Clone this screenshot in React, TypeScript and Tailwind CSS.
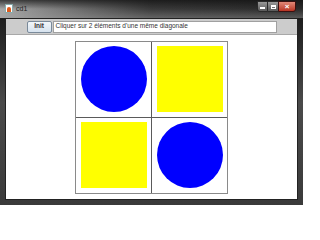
import React from 'react';

const Circle: React.FC = () => (
  <div className="w-[66px] h-[66px] rounded-full bg-[#0000ff]" />
);

const Square: React.FC = () => <div className="w-[66px] h-[66px] bg-[#ffff00]" />;

const Cell: React.FC<{ children: React.ReactNode }> = ({ children }) => (
  <div className="w-[75px] h-[75px] bg-white flex items-center justify-center">{children}</div>
);

const App: React.FC = () => {
  return (
    <div
      className="w-[303px] h-[205px] flex flex-col bg-gradient-to-b from-[#151515] via-[#4a4a4a] to-[#3a3a3a] overflow-hidden"
      style={{ fontFamily: '"Liberation Sans", Arial, sans-serif' }}
    >
      {/* title bar */}
      <div className="h-[18px] flex items-start relative bg-gradient-to-r from-[#a8a8a8] via-[#3a3a3a] to-[#2a2a2a]">
        <div className="absolute inset-0 bg-gradient-to-b from-[#101010]/70 via-transparent to-[#a0a0a0]/40" />
        <div className="relative flex items-center gap-[3px] pl-[5px] pt-[4px]">
          <div className="w-[8px] h-[9px] bg-white border border-[#8aa] flex items-end justify-center">
            <div className="w-[4px] h-[5px] bg-[#e05a1a] rounded-t-[2px]" />
          </div>
          <span className="text-[7px] leading-none text-[#222]">cd1</span>
        </div>
        <div className="relative ml-auto flex mr-[7px] mt-[1px]">
          <div className="w-[11px] h-[11px] rounded-bl-[3px] bg-gradient-to-b from-[#9a9a9a] to-[#5a5a5a] border border-[#2a2a2a] flex items-end justify-center pb-[2px]">
            <div className="w-[5px] h-[2px] bg-white" />
          </div>
          <div className="w-[10px] h-[11px] bg-gradient-to-b from-[#9a9a9a] to-[#5a5a5a] border-y border-[#2a2a2a] flex items-center justify-center">
            <div className="w-[5px] h-[4px] border border-white border-t-2" />
          </div>
          <div className="w-[18px] h-[11px] rounded-br-[3px] bg-gradient-to-b from-[#e08878] to-[#b83222] border border-[#3a1010] flex items-center justify-center text-white text-[8px] font-bold leading-none">
            ×
          </div>
        </div>
      </div>

      {/* client area */}
      <div className="flex-1 flex flex-col px-[5px] pb-[5px]">
        <div className="flex-1 flex flex-col border border-[#222]">
          {/* toolbar */}
          <div className="h-[16px] bg-[#cccccc] border-b border-[#a8a8a8] flex items-center justify-center gap-[1px]">
            <div className="w-[25px] h-[12px] rounded-[2px] border border-[#7a8a9a] bg-gradient-to-b from-[#f2f6fa] to-[#d6e2ee] flex items-center justify-center text-[6.5px] font-bold text-[#333] leading-none">
              Init
            </div>
            <div className="w-[224px] h-[12px] bg-white border border-[#a0a0a0] flex items-center pl-[2px] text-[6.5px] text-[#333] leading-none whitespace-nowrap">
              Cliquer sur 2 éléments d'une même diagonale
            </div>
          </div>
          {/* content */}
          <div className="flex-1 bg-white flex items-center justify-center">
            <div className="grid grid-cols-2 gap-px bg-[#5a5a5a] border border-[#8a8a8a]">
              <Cell>
                <Circle />
              </Cell>
              <Cell>
                <Square />
              </Cell>
              <Cell>
                <Square />
              </Cell>
              <Cell>
                <Circle />
              </Cell>
            </div>
          </div>
        </div>
      </div>
    </div>
  );
};

export default App;
